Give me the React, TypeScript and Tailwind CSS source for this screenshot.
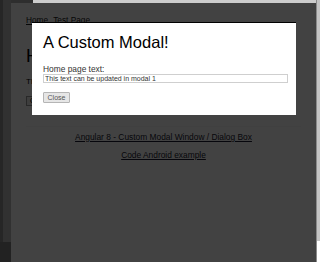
import { useState } from 'react'

const font = { fontFamily: '"Liberation Sans", Arial, sans-serif' }

function Modal({ onClose }: { onClose: () => void }) {
  const [text, setText] = useState('This text can be updated in modal 1')
  return (
    <div className="absolute inset-0 bg-black/[0.74]">
      <div className="ml-[21px] mt-[19px] w-[264px] h-[93px] bg-white border-t border-black px-[11px] pt-[10px]">
        <h1 className="text-[16.5px] leading-[19px] text-black">A Custom Modal!</h1>
        <label className="block mt-[12px] text-[8.4px] leading-[10px] text-[#333]">Home page text:</label>
        <input
          value={text}
          onChange={(e) => setText(e.target.value)}
          className="block w-[245px] h-[9px] border border-[#cfcfcf] px-[1px] text-[7px] leading-[7px] text-[#333] outline-none"
        />
        <button
          onClick={onClose}
          className="mt-[9px] w-[27px] h-[11px] border border-[#b5b5b5] rounded-[1px] bg-[#e6e6e6] text-[7px] leading-[9px] text-[#555]"
        >
          Close
        </button>
      </div>
    </div>
  )
}

export default function App() {
  const [open, setOpen] = useState(true)

  return (
    <div className="w-[320px] h-[262px] flex overflow-hidden bg-white" style={font}>
      {/* left strip */}
      <div className="w-[11px] flex flex-col">
        <div className="flex-1 flex">
          <div className="w-[3px] bg-[#262626]" />
          <div className="flex-1 bg-[#313131]" />
        </div>
        <div className="h-[20px] bg-[#222]" />
      </div>

      {/* page */}
      <div className="flex-1 flex flex-col">
        <div className="h-[3px] flex">
          <div className="w-[22px] bg-[#2e2e2e]" />
          <div className="flex-1 bg-[#cdcdcd]" />
        </div>
        <div className="relative flex-1 bg-white pl-[15px]">
          <div className="pt-[13px] text-[8.3px] leading-[9px] text-[#222]">
            <a className="underline mr-[5px]">Home</a>
            <a className="underline">Test Page</a>
          </div>
          <h1 className="mt-[21px] text-[18px] leading-[20px] text-black">Home</h1>
          <p className="mt-[11px] text-[8px] leading-[9px] text-black">This text can be updated in modal 1</p>
          <button
            onClick={() => setOpen(true)}
            className="mt-[9px] h-[10px] px-[3px] border border-[#999] bg-[#eee] text-[7px] leading-[8px]"
          >
            Open Modal 1
          </button>
          <div className="mt-[16px] mr-[15px] border-t border-[#f6f6f6]" />
          <div className="-ml-[15px] pt-[5px] flex flex-col items-center gap-[8px] text-[8.4px] leading-[10px] text-[#1a1a30]">
            <a className="underline">Angular 8 - Custom Modal Window / Dialog Box</a>
            <a className="underline">Code Android example</a>
          </div>
          {open && <Modal onClose={() => setOpen(false)} />}
        </div>
      </div>

      {/* scrollbar */}
      <div className="w-[4px] flex flex-col border-l border-[#8a8a8a]">
        <div className="h-[241px] bg-[#c4c4c4]" />
        <div className="flex-1 bg-white" />
      </div>
    </div>
  )
}
